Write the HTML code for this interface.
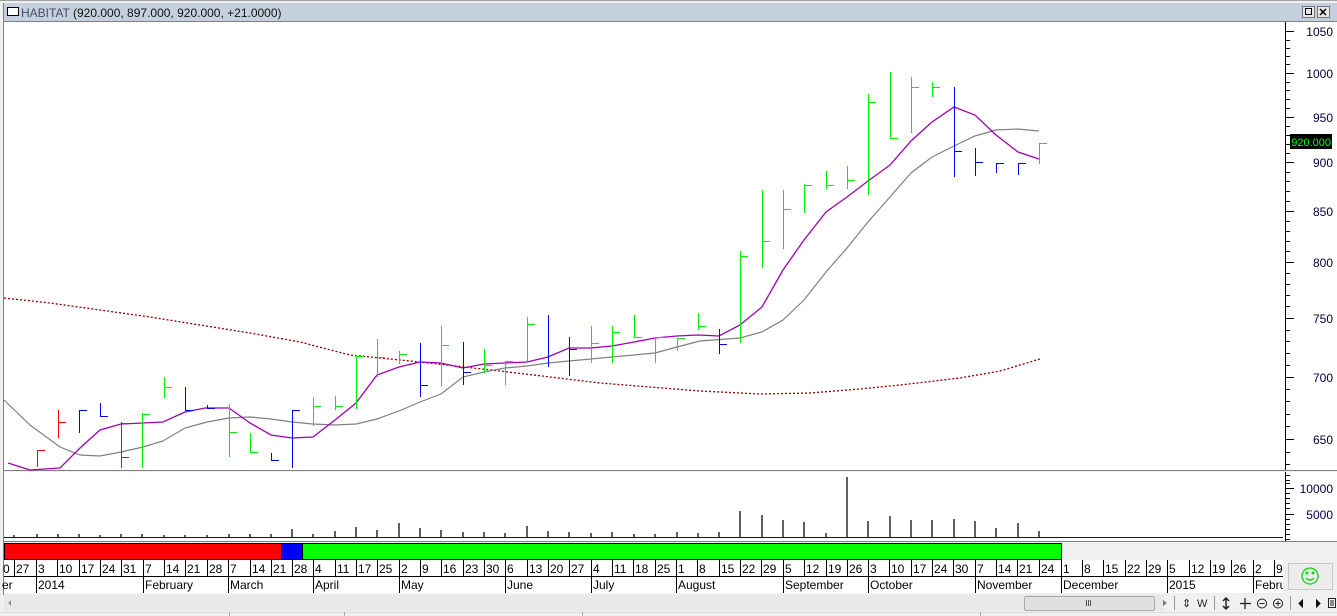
<!DOCTYPE html>
<html><head><meta charset="utf-8"><style>
html,body{margin:0;padding:0;background:#f0f0f0;overflow:hidden}
svg{display:block;font-family:"Liberation Sans",sans-serif}
</style></head><body>
<svg width="1337" height="616" viewBox="0 0 1337 616" xmlns="http://www.w3.org/2000/svg" shape-rendering="crispEdges">
<rect x="0" y="0" width="1337" height="616" fill="#f0f0f0"/>
<line x1="0" y1="0.5" x2="1337" y2="0.5" stroke="#a0a0a0"/>
<rect x="3" y="3" width="1334" height="18" fill="#c4d0dd"/>
<line x1="3" y1="21.5" x2="1337" y2="21.5" stroke="#808080"/>
<line x1="3.5" y1="3" x2="3.5" y2="595" stroke="#808080"/>
<rect x="7.5" y="7.5" width="11" height="8" fill="#fff" stroke="#000"/>
<text x="21" y="17" font-size="12" fill="#4a4a6a">HABITAT <tspan fill="#111">(920.000, 897.000, 920.000, +21.0000)</tspan></text>
<rect x="1302.5" y="6.5" width="12" height="11" fill="#e8e8e8" stroke="#777"/>
<rect x="1305.5" y="8.5" width="6" height="6" fill="none" stroke="#000"/>
<rect x="1317.5" y="6.5" width="12" height="11" fill="#e8e8e8" stroke="#777"/>
<path d="M1320 9l6 6M1326 9l-6 6" stroke="#000" stroke-width="1.5" shape-rendering="auto"/>
<rect x="4" y="22" width="1333" height="448" fill="#fff"/>
<line x1="4" y1="470.5" x2="1337" y2="470.5" stroke="#808080"/>
<rect x="4" y="472" width="1333" height="69" fill="#fff"/>
<line x1="4" y1="541.5" x2="1337" y2="541.5" stroke="#808080"/>
<line x1="1285.5" y1="22" x2="1285.5" y2="470" stroke="#000"/>
<line x1="1285.5" y1="472" x2="1285.5" y2="541" stroke="#000"/>
<g stroke="#000">
<path d="M1286 31.5h8M1286 73.5h8M1286 117.5h8M1286 162.5h8M1286 211.5h8M1286 262.5h8M1286 318.5h8M1286 377.5h8M1286 439.5h8"/>
<path d="M1286 40.5h4M1286 48.5h4M1286 56.5h4M1286 64.5h4M1286 82.5h4M1286 90.5h4M1286 99.5h4M1286 108.5h4M1286 126.5h4M1286 135.5h4M1286 144.5h4M1286 153.5h4M1286 172.5h4M1286 181.5h4M1286 191.5h4M1286 201.5h4M1286 221.5h4M1286 231.5h4M1286 241.5h4M1286 251.5h4M1286 273.5h4M1286 284.5h4M1286 295.5h4M1286 306.5h4M1286 330.5h4M1286 341.5h4M1286 353.5h4M1286 365.5h4M1286 389.5h4M1286 401.5h4M1286 414.5h4M1286 426.5h4M1286 452.5h4M1286 464.5h4"/>
<path d="M1286 488.5h8M1286 514.5h8M1286 475.5h4M1286 480.5h4M1286 483.5h4M1286 493.5h4M1286 498.5h4M1286 503.5h4M1286 508.5h4M1286 519.5h4M1286 524.5h4M1286 529.5h4M1286 534.5h4M1286 539.5h4"/>
</g>
<g font-size="12" fill="#000040" text-anchor="end">
<text x="1333" y="36">1050</text><text x="1333" y="78">1000</text><text x="1333" y="122">950</text>
<text x="1333" y="167">900</text><text x="1333" y="216">850</text><text x="1333" y="267">800</text>
<text x="1333" y="323">750</text><text x="1333" y="382">700</text><text x="1333" y="444">650</text>
<text x="1333" y="493">10000</text><text x="1333" y="519">5000</text>
</g>
<rect x="1290" y="134" width="42" height="15" fill="#000"/>
<text x="1331" y="146" font-size="11" fill="#00ff00" text-anchor="end">920.000</text>
<g fill="none" shape-rendering="auto">
<polyline stroke="#8b0000" stroke-width="1.3" stroke-dasharray="2,2" points="4,298 50,303 100,310 150,317 200,325 250,333 300,342 350,355 420,362 500,371 600,383 700,391 760,394 810,393 860,389 900,385 960,378 1000,371 1040,359"/>
<polyline stroke="#808080" stroke-width="1.2" points="4,400 30,425 60,447 80,455 100,456 121,452 143,447 163,441 185,428 207,422 229,418 250,417 271,419 292,422 313,424 335,425 356,424 377,419 399,411 420,402 441,394 463,377 484,372 505,368 527,366 548,363 569,361 591,359 612,357 634,355 655,353 677,347 700,341 740,338 762,332 783,320 804,300 826,272 847,248 868,222 890,197 911,173 932,157 954,146 975,136 996,130 1018,129 1039,131"/>
<polyline stroke="#a000b0" stroke-width="1.3" points="8,463 30,470 60,468 80,448 100,430 121,424 143,423 163,422 185,412 205,408 229,408 250,423 271,435 292,438 313,437 335,420 356,403 377,375 399,367 420,362 441,363 463,368 484,364 505,363 527,362 548,357 569,348 591,348 612,346 634,342 655,338 677,336 698,335 719,336 740,325 762,307 783,270 804,240 826,212 847,197 868,181 890,165 911,141 932,122 954,107 975,115 996,135 1018,152 1039,159"/>
</g>
<g stroke="#ff0000">
<path d="M37.5 450v17M37 450.5h8M58.5 410v28M58 422.5h8M121.5 422v46M121 457.5h8M121 423.5h3"/>
</g>
<g stroke="#0000ff">
<path d="M79.5 410v23M79 410.5h8M100.5 403v14M100 416.5h8M185.5 387v23M185 410.5h8M207.5 405v4M207 408.5h8M271.5 453v8M271 460.5h8M292.5 410v58M292 410.5h8M420.5 343v54M420 385.5h8M463.5 342v43M463 372.5h8M548.5 315v52M569.5 337v39M569 349.5h8M719.5 329v25M719 344.5h8M954.5 87v90M954 151.5h8M975.5 148v28M975 162.5h8M996.5 163v10M996 163.5h8M1018.5 163v12M1018 163.5h8"/>
</g>
<g stroke="#00ee00">
<path d="M142.5 413v55M142 414.5h8M164.5 377v21M164 387.5h8M229.5 404v53M229 432.5h8M250.5 433v19M250 452.5h8M313.5 397v29M313 406.5h8M335.5 396v14M335 406.5h8M356.5 355v54M356 356.5h8M377.5 339v38M377 357.5h8M399.5 351v13M399 354.5h8M441.5 326v60M441 345.5h8M484.5 349v24M484 365.5h8M505.5 361v24M505 361.5h8M527.5 317v44M527 324.5h8M591.5 326v37M591 343.5h8M612.5 326v37M612 332.5h8M634.5 315v22M634 337.5h8M655.5 337v26M655 337.5h8M677.5 338v13M677 338.5h8M698.5 313v17M698 326.5h8M740.5 251v92M740 256.5h8M762.5 190v78M762 241.5h8M783.5 190v59M783 209.5h8M804.5 184v29M804 185.5h8M826.5 171v18M826 185.5h8M847.5 166v23M847 180.5h8M868.5 94v101M868 102.5h8M890.5 72v66M890 138.5h8M911.5 77v56M911 87.5h8M932.5 82v15M932 87.5h8M1039.5 143v21M1039 143.5h8"/>
</g>
<line x1="4" y1="537.5" x2="1283" y2="537.5" stroke="#0000c0"/>
<g stroke="#606060" stroke-width="2">
<path d="M14 537v-2M37 537v-3M58 537v-3M79 537v-3M100 537v-2M121 537v-3M142 537v-3M164 537v-2M185 537v-2M207 537v-2M229 537v-3M250 537v-3M271 537v-3M292 537v-8M313 537v-3M335 537v-6M356 537v-10M377 537v-7M399 537v-14M420 537v-9M441 537v-7M463 537v-5M484 537v-5M505 537v-4M527 537v-11M548 537v-6M569 537v-5M591 537v-4M612 537v-5M634 537v-3M655 537v-3M677 537v-5M698 537v-4M719 537v-5M740 537v-26M762 537v-22M783 537v-17M804 537v-15M826 537v-4M847 537v-60M868 537v-16M890 537v-21M911 537v-17M932 537v-17M954 537v-18M975 537v-16M996 537v-9M1018 537v-14M1039 537v-6"/>
</g>
<rect x="4" y="543" width="1333" height="17" fill="#f0f0f0"/>
<rect x="4.5" y="543.5" width="277" height="16" fill="#ff0000" stroke="#000"/>
<rect x="281.5" y="543.5" width="21" height="16" fill="#0000ff" stroke="#000"/>
<rect x="302.5" y="543.5" width="759" height="16" fill="#00ff00" stroke="#000"/>
<rect x="4" y="560" width="1250" height="33" fill="#fff"/>
<rect x="1254" y="560" width="29" height="33" fill="#fff"/>
<line x1="4" y1="576.5" x2="1283" y2="576.5" stroke="#000"/>
<g stroke="#000">
<path d="M14.5 560v16M36.5 560v33M57.5 560v16M79.5 560v16M100.5 560v16M121.5 560v16M143.5 560v33M164.5 560v16M185.5 560v16M207.5 560v16M228.5 560v33M250.5 560v16M271.5 560v16M292.5 560v16M313.5 560v33M335.5 560v16M356.5 560v16M377.5 560v16M399.5 560v33M420.5 560v16M441.5 560v16M463.5 560v16M484.5 560v16M505.5 560v33M527.5 560v16M548.5 560v16M569.5 560v16M591.5 560v33M612.5 560v16M633.5 560v16M655.5 560v16M676.5 560v33M697.5 560v16M719.5 560v16M740.5 560v16M761.5 560v16M783.5 560v33M804.5 560v16M826.5 560v16M847.5 560v16M868.5 560v33M889.5 560v16M911.5 560v16M932.5 560v16M953.5 560v16M975.5 560v33M996.5 560v16M1017.5 560v16M1039.5 560v16M1061.5 560v33M1082.5 560v16M1103.5 560v16M1125.5 560v16M1146.5 560v16M1167.5 560v33M1189.5 560v16M1210.5 560v16M1231.5 560v16M1253.5 560v33M1274.5 560v16"/>
</g>
<g font-size="12" fill="#000">
<text x="3" y="573">0</text><text x="16" y="573">27</text><text x="38" y="573">3</text><text x="59" y="573">10</text><text x="81" y="573">17</text><text x="102" y="573">24</text><text x="123" y="573">31</text><text x="145" y="573">7</text><text x="166" y="573">14</text><text x="187" y="573">21</text><text x="209" y="573">28</text><text x="230" y="573">7</text><text x="252" y="573">14</text><text x="273" y="573">21</text><text x="294" y="573">28</text><text x="315" y="573">4</text><text x="337" y="573">11</text><text x="358" y="573">17</text><text x="379" y="573">25</text><text x="401" y="573">2</text><text x="422" y="573">9</text><text x="443" y="573">16</text><text x="465" y="573">23</text><text x="486" y="573">30</text><text x="507" y="573">6</text><text x="529" y="573">13</text><text x="550" y="573">20</text><text x="571" y="573">27</text><text x="593" y="573">4</text><text x="614" y="573">11</text><text x="635" y="573">18</text><text x="657" y="573">25</text><text x="678" y="573">1</text><text x="699" y="573">8</text><text x="721" y="573">15</text><text x="742" y="573">22</text><text x="763" y="573">29</text><text x="785" y="573">5</text><text x="806" y="573">12</text><text x="828" y="573">19</text><text x="849" y="573">26</text><text x="870" y="573">3</text><text x="891" y="573">10</text><text x="913" y="573">17</text><text x="934" y="573">24</text><text x="955" y="573">30</text><text x="977" y="573">7</text><text x="998" y="573">14</text><text x="1019" y="573">21</text><text x="1041" y="573">24</text><text x="1063" y="573">1</text><text x="1084" y="573">8</text><text x="1105" y="573">15</text><text x="1127" y="573">22</text><text x="1148" y="573">29</text><text x="1169" y="573">5</text><text x="1191" y="573">12</text><text x="1212" y="573">19</text><text x="1233" y="573">26</text><text x="1255" y="573">2</text><text x="1276" y="573">9</text>
<text x="2" y="589">er</text><text x="38" y="589">2014</text><text x="145" y="589">February</text><text x="230" y="589">March</text><text x="315" y="589">April</text><text x="401" y="589">May</text><text x="507" y="589">June</text><text x="593" y="589">July</text><text x="678" y="589">August</text><text x="785" y="589">September</text><text x="870" y="589">October</text><text x="977" y="589">November</text><text x="1063" y="589">December</text><text x="1169" y="589">2015</text>
<text x="1255" y="589">Febru</text>
</g>
<rect x="1283" y="560" width="54" height="33" fill="#f0f0f0"/>
<rect x="1288.5" y="563.5" width="44" height="26" fill="#ececec" stroke="#c8c8c8"/>
<g fill="none" stroke="#00dd00" stroke-width="1.3" shape-rendering="auto">
<circle cx="1310" cy="576" r="8"/><path d="M1306 578q4 4 8 0"/>
<circle cx="1307" cy="573" r="0.8" fill="#00dd00"/><circle cx="1313" cy="573" r="0.8" fill="#00dd00"/>
</g>
<rect x="4" y="595" width="1160" height="16" fill="#e8e8e8"/>
<path d="M8 603l3-3v6z" fill="#888"/>
<rect x="1024.5" y="596.5" width="130" height="14" rx="2" fill="#e0e0e0" stroke="#a8a8a8"/>
<path d="M1086.5 600v6M1088.5 600v6M1090.5 600v6" stroke="#555"/>
<path d="M1163 600l4 3-4 3z" fill="#777"/>
<line x1="1174.5" y1="596" x2="1174.5" y2="610" stroke="#999"/>
<g font-size="11" fill="#222">
<text x="1182" y="607">⇕</text><text x="1197" y="607">W</text>
</g>
<line x1="1214.5" y1="596" x2="1214.5" y2="610" stroke="#999"/>
<g stroke="#222" fill="none" shape-rendering="auto">
<path d="M1226 598v11M1223 601l3-3 3 3M1223 606l3 3 3-3" stroke-width="1.5"/>
<path d="M1245 598v11M1240 603.5h11" stroke-width="1.3"/>
<circle cx="1262" cy="603.5" r="4.5"/><path d="M1259.5 603.5h5"/>
<circle cx="1278" cy="603.5" r="4.5"/><path d="M1275.5 603.5h5M1278 601v5"/>
</g>
<line x1="1290.5" y1="596" x2="1290.5" y2="610" stroke="#999"/>
<path d="M1303 599l-5 4.5 5 4.5z M1316 599l5 4.5-5 4.5z" fill="#111"/>
<rect x="1328.5" y="598.5" width="7" height="9" fill="none" stroke="#222"/>
<path d="M1330 601h4M1330 603h4M1330 605h4" stroke="#222"/>
<line x1="0" y1="612.5" x2="1337" y2="612.5" stroke="#dcdcdc"/>
<path d="M229.5 612v4M344.5 612v4M582.5 612v4M980.5 612v4" stroke="#aaa"/>
</svg>
</body></html>
